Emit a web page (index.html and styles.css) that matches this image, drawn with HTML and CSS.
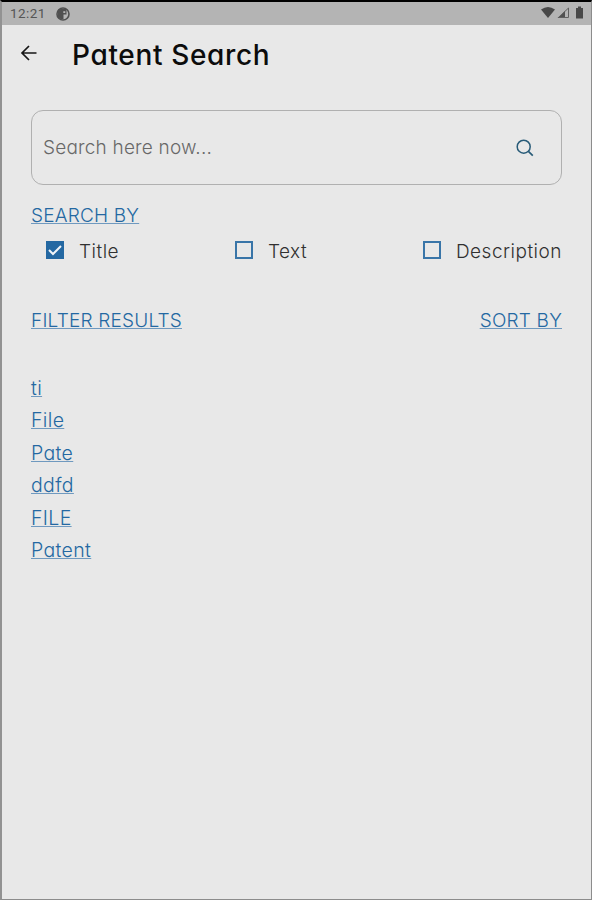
FILE: index.html
```html
<!DOCTYPE html>
<html lang="en">
<head>
    <meta charset="UTF-8">
    <title>Patent Search</title>
    <link rel="stylesheet" href="styles.css">
</head>
<body>
    <div class="screen">
        <div class="status-bar">
            <span class="time">12:21</span>
            <svg class="app-icon" width="14" height="14" viewBox="0 0 14 14">
                <circle cx="7" cy="7" r="6" fill="none" stroke="#505050" stroke-width="1.6"/>
                <path d="M2 3l2.500-1h6v5.500H7.500V12H4.500L2 10z" fill="#505050"/>
                <path d="M7.300 4.200h2v1.800h-2z" fill="#b4b4b4"/>
            </svg>
            <svg class="signals" width="46" height="16" viewBox="0 0 46 16">
                <path d="M1 4.500Q8 -0.500 15 4.500L8 13z" fill="#484848"/>
                <path d="M25 6v7h-7.500z" fill="#505050"/>
                <path d="M28.500 3v9.500H18.500z" fill="none" stroke="#606060"/>
                <path d="M38 1.500h3V3h2v10.500h-7V3h2z" fill="#484848"/>
            </svg>
        </div>

        <div class="header">
            <svg class="back" width="18" height="18" viewBox="0 0 18 18">
                <path d="M16.500 9H2M9 2L2 9l7 7" fill="none" stroke="#161616" stroke-width="1.7"/>
            </svg>
            <h1>Patent Search</h1>
        </div>

        <div class="content">
            <div class="search-box">
                <input type="text" placeholder="Search here now...">
                <svg width="18" height="18" viewBox="0 0 18 18">
                    <circle cx="7.700" cy="7.700" r="6.500" fill="none" stroke="#285b78" stroke-width="1.500"/>
                    <path d="M12.400 12.400l4.400 4.200" stroke="#285b78" stroke-width="1.700"/>
                </svg>
            </div>

            <a class="link search-by">SEARCH BY</a>
            <div class="options">
                <label class="option">
                    <svg class="check" width="18" height="18" viewBox="0 0 18 18">
                        <path d="M0 0h18v18H0z" fill="#2468a2"/>
                        <path d="M3 9l4 4 8-8" fill="none" stroke="#f0f4f8" stroke-width="2"/>
                    </svg>
                    <span>Title</span>
                </label>
                <label class="option">
                    <span class="box"></span>
                    <span>Text</span>
                </label>
                <label class="option">
                    <span class="box"></span>
                    <span>Description</span>
                </label>
            </div>

            <div class="toolbar">
                <a class="link">FILTER RESULTS</a>
                <a class="link">SORT BY</a>
            </div>

            <div class="results">
                <a class="link">ti</a>
                <a class="link">File</a>
                <a class="link">Pate</a>
                <a class="link">ddfd</a>
                <a class="link">FILE</a>
                <a class="link">Patent</a>
            </div>
        </div>
    </div>
</body>
</html>
```
FILE: styles.css
```css
* {
    box-sizing: border-box;
}

body {
    margin: 0;
    font-family: Inter, "Liberation Sans", sans-serif;
    font-weight: 300;
    font-feature-settings: "cv11";
    background-color: #e8e8e8;
}

.screen {
    height: 900px;
    border: 1px solid #8c8c8c;
    border-top: 2px solid #000;
    border-left: 2px solid #929292;
    overflow: hidden;
}

.status-bar {
    height: 23px;
    display: flex;
    align-items: center;
    padding: 0 5px 0 8px;
    background-color: #b4b4b4;
}

.time {
    width: 46px;
    margin-top: -1px;
    font-family: Roboto, sans-serif;
    font-size: 13.5px;
    font-weight: 400;
    letter-spacing: 0.4px;
    color: #555;
}

.signals {
    margin-left: auto;
    margin-top: -1px;
}

.header {
    height: 59px;
    display: flex;
    align-items: center;
    padding-left: 18px;
}

.back {
    margin-top: -4px;
}

h1 {
    margin: 0 0 0 34px;
    font-size: 28px;
    font-weight: 500;
    line-height: 34px;
    letter-spacing: 0.65px;
    color: #0c0c0c;
}

.content {
    padding: 26px 29px 0;
}

.search-box {
    height: 75px;
    display: flex;
    align-items: center;
    padding: 0 27px 0 11px;
    border: 1px solid #b0b0b0;
    border-radius: 12px;
}

input {
    flex: 1;
    padding: 0;
    border: none;
    outline: none;
    background: none;
    font: inherit;
    font-size: 19px;
    font-feature-settings: inherit;
    letter-spacing: 0.2px;
}

input::placeholder {
    color: #686868;
    opacity: 1;
}

.link {
    font-size: 19px;
    line-height: 24px;
    letter-spacing: 0.2px;
    color: #2468a2;
    text-decoration: underline;
    text-decoration-color: #6f99bf;
    text-decoration-thickness: 1px;
    text-decoration-skip-ink: none;
    text-underline-offset: 1px;
}

.search-by {
    display: block;
    margin-top: 19px;
}

.options {
    display: flex;
    justify-content: space-between;
    margin-top: 11px;
    padding-left: 15px;
}

.option {
    height: 24px;
    display: flex;
    align-items: center;
    gap: 15px;
    font-size: 19px;
    letter-spacing: 0.5px;
    color: #303030;
}

.check,
.box {
    margin-bottom: 2px;
}

.box {
    width: 18px;
    height: 18px;
    border: 2px solid #3975a8;
}

.toolbar {
    display: flex;
    justify-content: space-between;
    margin-top: 46px;
}

.results {
    display: flex;
    flex-direction: column;
    align-items: flex-start;
    gap: 8.5px;
    margin-top: 42.5px;
}

.results .link {
    font-size: 19.5px;
    letter-spacing: 0.35px;
}
```
